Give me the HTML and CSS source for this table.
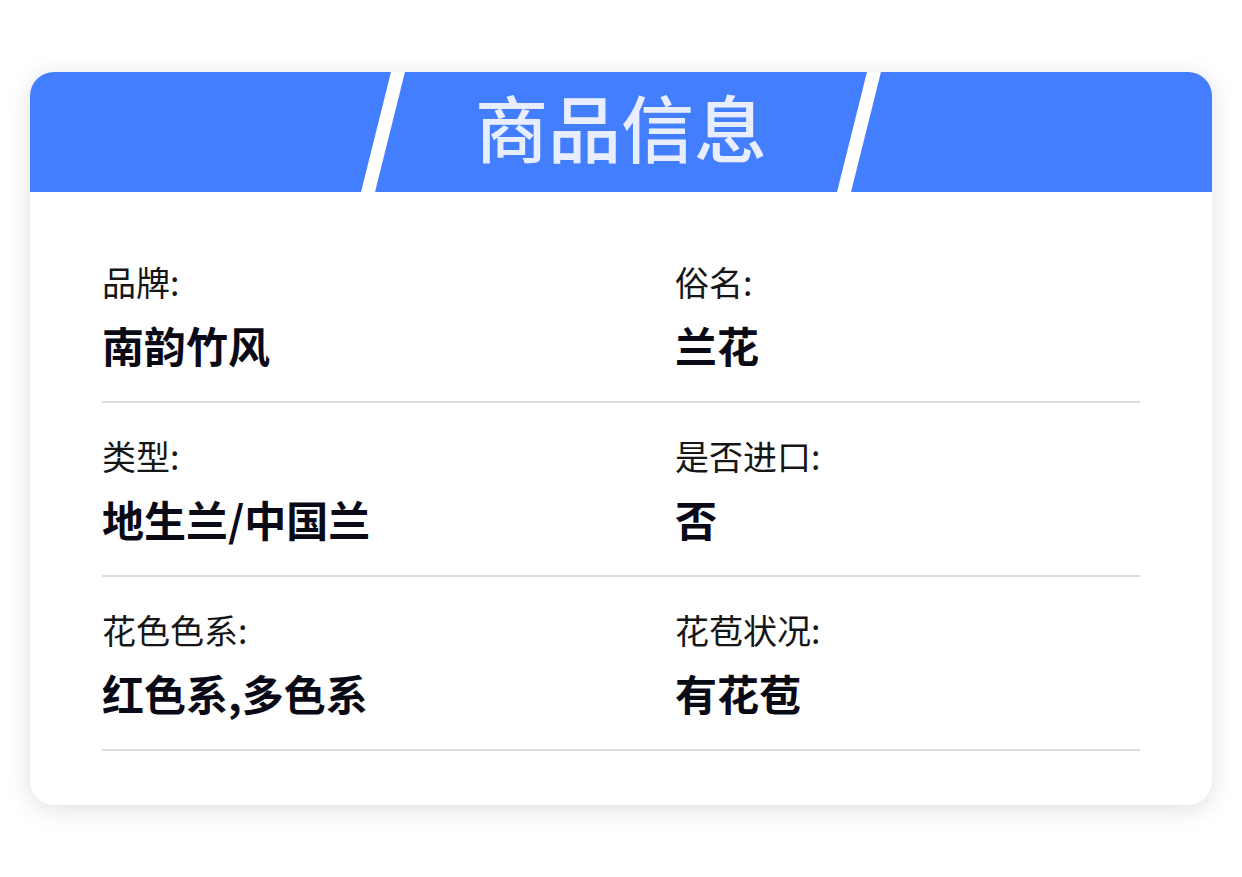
FILE: index.html
```html
<!DOCTYPE html>
<html lang="zh-CN">
<head>
<meta charset="utf-8">
<title>商品信息</title>
<link rel="stylesheet" href="styles.css">
</head>
<body>
<div class="card">
  <div class="header">
    <span class="stripe stripe-l"></span>
    <h1 class="title">商品信息</h1>
    <span class="stripe stripe-r"></span>
  </div>
  <div class="body">
    <div class="row">
      <div class="cell"><div class="label">品牌:</div><div class="value">南韵竹风</div></div>
      <div class="cell"><div class="label">俗名:</div><div class="value">兰花</div></div>
    </div>
    <div class="row">
      <div class="cell"><div class="label">类型:</div><div class="value">地生兰/中国兰</div></div>
      <div class="cell"><div class="label">是否进口:</div><div class="value">否</div></div>
    </div>
    <div class="row">
      <div class="cell"><div class="label">花色色系:</div><div class="value">红色系,多色系</div></div>
      <div class="cell"><div class="label">花苞状况:</div><div class="value">有花苞</div></div>
    </div>
  </div>
</div>
</body>
</html>
```
FILE: styles.css
```css
* { box-sizing: border-box; }
html, body { margin: 0; padding: 0; background: #fff; }
body {
  font-family: "Noto Sans CJK SC", "Noto Sans", sans-serif;
  padding: 72px 30px 60px;
}
.card {
  background: #fff;
  border-radius: 24px;
  overflow: hidden;
  box-shadow: 0 4px 24px rgba(0, 0, 0, 0.13);
}
.header {
  position: relative;
  height: 120px;
  background: #437eff;
  display: flex;
  align-items: center;
  justify-content: center;
}
.title {
  margin: 0 0 13px;
  font-size: 73px;
  line-height: 1;
  font-weight: 500;
  color: #e8eeff;
}
.stripe {
  position: absolute;
  top: 0;
  bottom: 0;
  width: 14px;
  background: #fff;
  transform: skewX(-14deg);
}
.stripe-l { left: 346px; }
.stripe-r { left: 822px; }
.body {
  padding: 37px 72px 54px;
}
.row {
  display: grid;
  grid-template-columns: 573px 1fr;
  padding: 33px 0 30px;
  border-bottom: 2px solid #dcdce0;
}
.label {
  font-size: 34px;
  line-height: 40px;
  color: #161616;
}
.value {
  margin-top: 17px;
  font-size: 42px;
  line-height: 52px;
  font-weight: 700;
  color: #0a0a16;
}
```
